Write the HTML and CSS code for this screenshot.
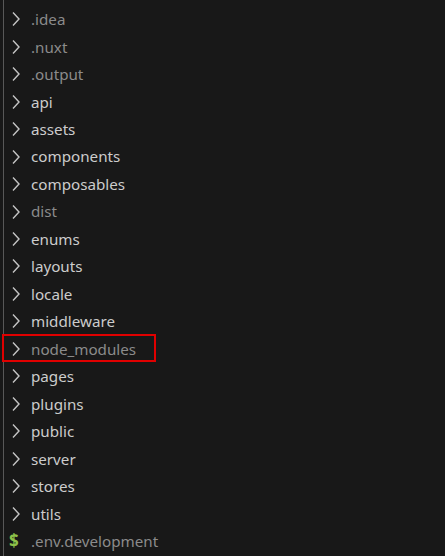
FILE: index.html
```html
<!DOCTYPE html>
<html>
<head>
<meta charset="utf-8">
<link rel="stylesheet" href="styles.css">
</head>
<body>
<div class="tree">
  <div class="guide"></div>
  <ul class="list">
    <li class="row dim"><svg class="chev" viewBox="0 0 21 16"><polyline points="4,1.5 10,8 4,14.5"/></svg><span class="name">.idea</span></li>
    <li class="row dim"><svg class="chev" viewBox="0 0 21 16"><polyline points="4,1.5 10,8 4,14.5"/></svg><span class="name">.nuxt</span></li>
    <li class="row dim"><svg class="chev" viewBox="0 0 21 16"><polyline points="4,1.5 10,8 4,14.5"/></svg><span class="name">.output</span></li>
    <li class="row"><svg class="chev" viewBox="0 0 21 16"><polyline points="4,1.5 10,8 4,14.5"/></svg><span class="name">api</span></li>
    <li class="row"><svg class="chev" viewBox="0 0 21 16"><polyline points="4,1.5 10,8 4,14.5"/></svg><span class="name">assets</span></li>
    <li class="row"><svg class="chev" viewBox="0 0 21 16"><polyline points="4,1.5 10,8 4,14.5"/></svg><span class="name">components</span></li>
    <li class="row"><svg class="chev" viewBox="0 0 21 16"><polyline points="4,1.5 10,8 4,14.5"/></svg><span class="name">composables</span></li>
    <li class="row dim"><svg class="chev" viewBox="0 0 21 16"><polyline points="4,1.5 10,8 4,14.5"/></svg><span class="name">dist</span></li>
    <li class="row"><svg class="chev" viewBox="0 0 21 16"><polyline points="4,1.5 10,8 4,14.5"/></svg><span class="name">enums</span></li>
    <li class="row"><svg class="chev" viewBox="0 0 21 16"><polyline points="4,1.5 10,8 4,14.5"/></svg><span class="name">layouts</span></li>
    <li class="row"><svg class="chev" viewBox="0 0 21 16"><polyline points="4,1.5 10,8 4,14.5"/></svg><span class="name">locale</span></li>
    <li class="row"><svg class="chev" viewBox="0 0 21 16"><polyline points="4,1.5 10,8 4,14.5"/></svg><span class="name">middleware</span></li>
    <li class="row dim marked"><svg class="chev" viewBox="0 0 21 16"><polyline points="4,1.5 10,8 4,14.5"/></svg><span class="name">node_modules</span></li>
    <li class="row"><svg class="chev" viewBox="0 0 21 16"><polyline points="4,1.5 10,8 4,14.5"/></svg><span class="name">pages</span></li>
    <li class="row"><svg class="chev" viewBox="0 0 21 16"><polyline points="4,1.5 10,8 4,14.5"/></svg><span class="name">plugins</span></li>
    <li class="row"><svg class="chev" viewBox="0 0 21 16"><polyline points="4,1.5 10,8 4,14.5"/></svg><span class="name">public</span></li>
    <li class="row"><svg class="chev" viewBox="0 0 21 16"><polyline points="4,1.5 10,8 4,14.5"/></svg><span class="name">server</span></li>
    <li class="row"><svg class="chev" viewBox="0 0 21 16"><polyline points="4,1.5 10,8 4,14.5"/></svg><span class="name">stores</span></li>
    <li class="row"><svg class="chev" viewBox="0 0 21 16"><polyline points="4,1.5 10,8 4,14.5"/></svg><span class="name">utils</span></li>
    <li class="row dim"><span class="dollar">$</span><span class="name">.env.development</span></li>
  </ul>
</div>
</body>
</html>
```
FILE: styles.css
```css
html, body {
  margin: 0;
  padding: 0;
  background: #181818;
  width: 445px;
  height: 556px;
  overflow: hidden;
}
.tree {
  position: relative;
  height: 556px;
  font-family: "Noto Sans", "Open Sans", sans-serif;
  font-size: 15.2px;
  color: #cccccc;
}
.guide {
  position: absolute;
  left: 3px;
  top: 0;
  bottom: 0;
  width: 1px;
  background: #585858;
}
.list {
  list-style: none;
  margin: 0;
  padding: 5px 0 0 0;
}
.row {
  position: relative;
  display: flex;
  align-items: center;
  height: 27.47px;
  padding-left: 9px;
  white-space: nowrap;
}
.row.dim { color: #8b8b8b; }
.row.dim.marked::after {
  content: "";
  position: absolute;
  left: 2px;
  top: -1px;
  width: 154px;
  height: 28px;
  border: 2px solid #e00000;
  box-sizing: border-box;
}
.chev {
  width: 21px;
  height: 16px;
  flex: none;
  margin-right: 1px;
  margin-top: 1px;
}
.chev polyline {
  fill: none;
  stroke: #c5c5c5;
  stroke-width: 1.4;
}
.dollar {
  width: 22px;
  flex: none;
  color: #8dc149;
  font-weight: bold;
  font-size: 17px;
}
.name {
  line-height: 1;
  padding-top: 2px;
}
```
